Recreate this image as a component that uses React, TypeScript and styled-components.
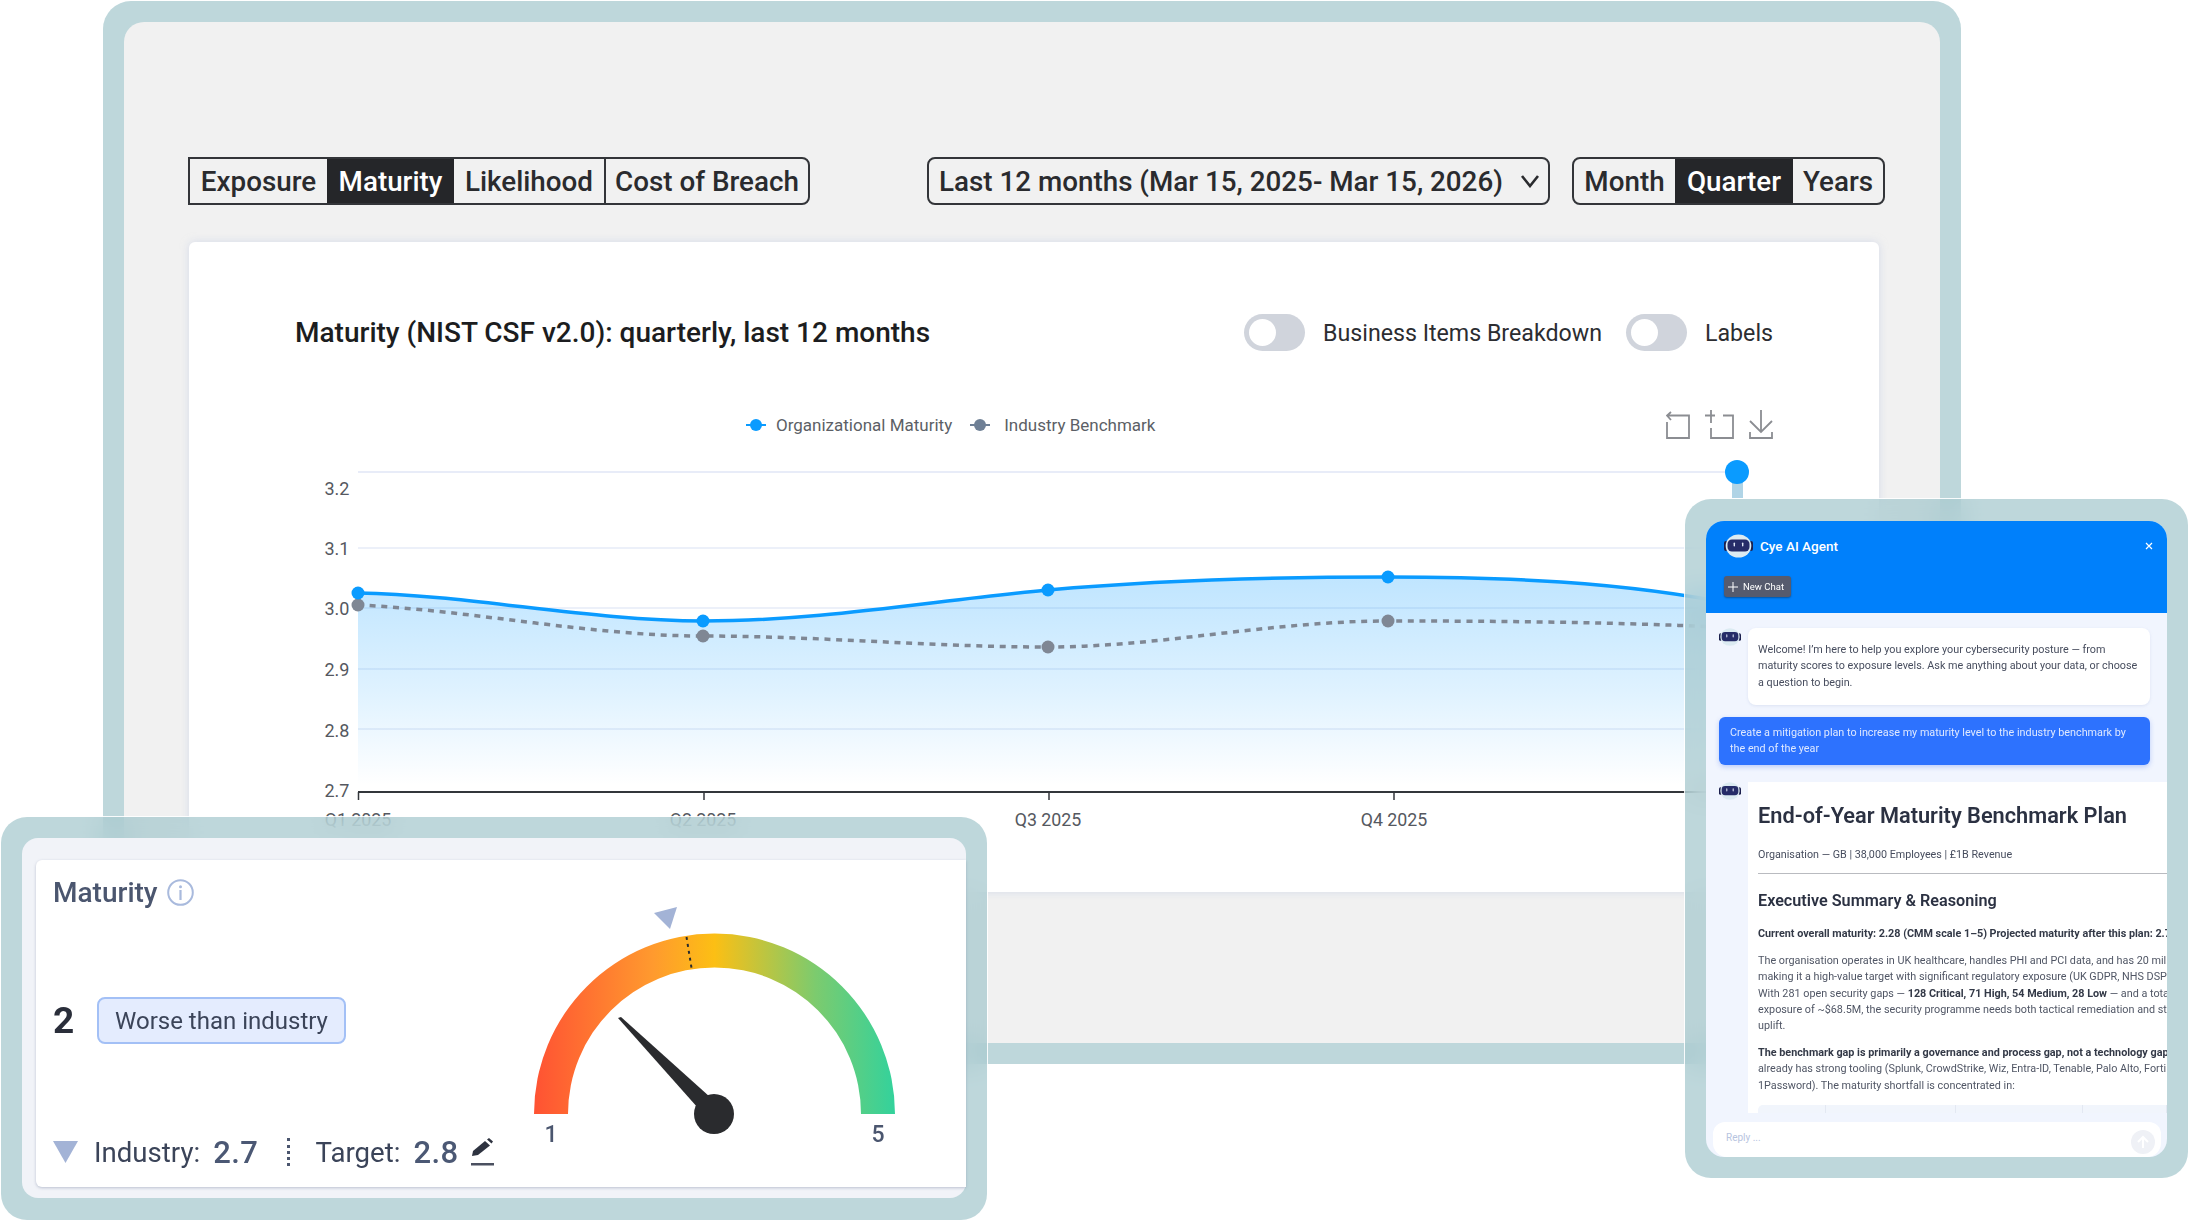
import React from 'react';
import styled, { createGlobalStyle } from 'styled-components';

const Global = createGlobalStyle`
  html, body { margin: 0; padding: 0; background: #fff; }
  body { font-family: Roboto, "Liberation Sans", sans-serif; }
  * { box-sizing: border-box; }
`;

const Page = styled.div`
  position: relative;
  width: 2190px;
  height: 1222px;
  overflow: hidden;
  background: #fff;
  padding: 1px 0 0 103px;
`;

const MainFrame = styled.div`
  width: 1858px;
  height: 1063px;
  padding: 21px;
  background: #bed7db;
  border-radius: 28px;
`;

const MainInner = styled.div`
  height: 100%;
  border-radius: 20px;
  background: #f1f1f1;
  padding: 135px 54px 0 64px;
`;

const Toolbar = styled.div`
  display: flex;
  align-items: center;
  justify-content: space-between;
  width: 1697px;
  height: 48px;
`;

const RightTools = styled.div`
  display: flex;
  gap: 22px;
`;

const Segment = styled.div<{ $squareLeft?: boolean }>`
  display: flex;
  height: 48px;
  border: 2px solid #333539;
  border-radius: ${p => (p.$squareLeft ? '0 8px 8px 0' : '8px')};
  overflow: hidden;
  background: #f1f1f1;
`;

const SegmentItem = styled.div<{ $active?: boolean; $w: number; $sep?: boolean }>`
  display: flex;
  align-items: center;
  justify-content: center;
  width: ${p => p.$w}px;
  font-size: 27.8px;
  font-weight: 500;
  white-space: nowrap;
  color: ${p => (p.$active ? '#fff' : '#2a2b2e')};
  background: ${p => (p.$active ? '#252629' : 'transparent')};
  border-left: ${p => (p.$sep ? '2px solid #333539' : 'none')};
`;

const DateSelect = styled.div`
  display: flex;
  align-items: center;
  justify-content: space-between;
  width: 623px;
  height: 48px;
  padding: 0 8px 0 10px;
  border: 2px solid #333539;
  border-radius: 8px;
  font-size: 27.8px;
  font-weight: 500;
  color: #2a2b2e;
  white-space: nowrap;
`;

const Chevron = styled.svg`
  flex: none;
`;

const Card = styled.div`
  width: 1690px;
  height: 650px;
  margin: 37px 0 0 1px;
  padding: 72px 106px 0 106px;
  background: #fff;
  border-radius: 6px;
  box-shadow: 0 0 8px rgba(190, 200, 225, 0.55);
`;

const CardHead = styled.div`
  display: flex;
  align-items: center;
  justify-content: space-between;
  height: 37px;
`;

const CardTitle = styled.div`
  font-size: 28px;
  font-weight: 500;
  color: #1c1d20;
  white-space: nowrap;
`;

const Toggles = styled.div`
  display: flex;
  align-items: center;
`;

const ToggleTrack = styled.div<{ $ml: number }>`
  width: 61px;
  height: 37px;
  margin-left: ${p => p.$ml}px;
  padding: 5px;
  border-radius: 19px;
  background: #d0d4dc;
`;

const ToggleThumb = styled.div`
  width: 27px;
  height: 27px;
  border-radius: 50%;
  background: #fff;
`;

const ToggleLabel = styled.div`
  margin-left: 18px;
  font-size: 23.2px;
  color: #2c2d31;
  white-space: nowrap;
`;

const ChartHead = styled.div`
  display: flex;
  align-items: center;
  height: 30px;
  margin-top: 59px;
  padding-left: 451px;
`;

const LegendItem = styled.div<{ $ml?: number }>`
  display: flex;
  align-items: center;
  margin-left: ${p => p.$ml ?? 0}px;
  font-size: 17px;
  color: #5c5f66;
  white-space: nowrap;
`;

const LegendMark = styled.svg<{ $mr: number }>`
  width: 20px;
  height: 16px;
  margin-right: ${p => p.$mr}px;
`;

const ChartTools = styled.div`
  display: flex;
  margin-left: auto;
  gap: 14px;
  color: #8b8d92;
  height: 30px;
`;

const ChartSvg = styled.svg`
  display: block;
  margin: 20px 0 0 -105px;
  overflow: visible;
  font-family: Roboto, "Liberation Sans", sans-serif;
`;

const GaugePanel = styled.div`
  position: absolute;
  left: 1px;
  top: 817px;
  width: 986px;
  height: 403px;
  padding: 21px;
  border-radius: 26px;
  background: rgba(162, 198, 204, 0.7);
  backdrop-filter: blur(14px);
  box-shadow: 0 0 0 1px rgba(255, 255, 255, 0.9);
`;

const GaugeInner = styled.div`
  height: 360px;
  padding: 22px 0 11px 14px;
  background: #f1f3f8;
  border-radius: 16px;
`;

const GaugeCard = styled.div`
  position: relative;
  display: flex;
  height: 327px;
  background: #fff;
  border-radius: 6px 0 0 6px;
  box-shadow: 0 1px 3px rgba(120, 130, 160, 0.45);
`;

const GaugeLeft = styled.div`
  display: flex;
  flex-direction: column;
  width: 490px;
  padding: 0 0 0 17px;
`;

const GaugeTitle = styled.div`
  display: flex;
  align-items: center;
  gap: 9px;
  height: 27px;
  margin-top: 19px;
  font-size: 28px;
  font-weight: 500;
  color: #4b566f;
`;

const ScoreRow = styled.div`
  display: flex;
  align-items: center;
  height: 47px;
  margin-top: 91px;
`;

const Score = styled.div`
  width: 44px;
  font-size: 37px;
  font-weight: 700;
  color: #2a2e3a;
`;

const ScoreBadge = styled.div`
  display: flex;
  align-items: center;
  justify-content: center;
  width: 249px;
  height: 47px;
  border: 2px solid #a3c0f6;
  border-radius: 8px;
  background: #e4ecfe;
  font-size: 24px;
  color: #3b4459;
  white-space: nowrap;
`;

const StatsRow = styled.div`
  display: flex;
  align-items: center;
  height: 30px;
  margin-top: 93px;
  white-space: nowrap;
`;

const StatLabel = styled.div<{ $ml: number }>`
  margin-left: ${p => p.$ml}px;
  font-size: 27.6px;
  color: #3b4459;
`;

const StatValue = styled.div`
  margin-left: 13px;
  font-size: 31px;
  font-weight: 500;
  letter-spacing: 0.5px;
  color: #4b5874;
`;

const StatDivider = styled.div`
  width: 0;
  height: 28px;
  margin-left: 29px;
  border-left: 3px dotted #4b566f;
`;

const EditIcon = styled.svg`
  margin-left: 11px;
`;

const GaugeSvg = styled.svg`
  position: absolute;
  left: 464px;
  top: 22px;
  font-family: Roboto, "Liberation Sans", sans-serif;
`;

const ChatPanel = styled.div`
  position: absolute;
  left: 1685px;
  top: 499px;
  width: 503px;
  height: 679px;
  padding: 22px 21px 21px 21px;
  border-radius: 26px;
  background: rgba(162, 198, 204, 0.7);
  backdrop-filter: blur(14px);
  box-shadow: 0 0 0 1px rgba(255, 255, 255, 0.9);
`;

const ChatInner = styled.div`
  display: flex;
  flex-direction: column;
  width: 461px;
  height: 636px;
  border-radius: 18px;
  overflow: hidden;
  background: #f1f5fe;
  font-family: Roboto, "Liberation Sans", sans-serif;
`;

const ChatHeader = styled.div`
  flex: none;
  height: 92px;
  padding: 13px 13px 0 18px;
  background: #0080fb;
`;

const ChatTitleRow = styled.div`
  display: flex;
  align-items: center;
  height: 24px;
  color: #fff;
  font-size: 13.5px;
  font-weight: 500;
`;

const ChatTitle = styled.div`
  margin-left: 7px;
`;

const CloseBtn = styled.div`
  display: flex;
  margin-left: auto;
  color: #fff;
`;

const NewChat = styled.div`
  display: flex;
  align-items: center;
  gap: 5px;
  width: 67px;
  height: 21px;
  margin-top: 18px;
  padding-left: 4px;
  border-radius: 3px;
  background: #565b6e;
  box-shadow: 0 1px 2px rgba(0, 0, 0, 0.35);
  color: #fff;
  font-size: 9.5px;
  white-space: nowrap;
`;

const ChatBody = styled.div`
  flex: 1;
  min-height: 0;
  overflow: hidden;
  padding: 15px 0 0 13px;
`;

const BotRow = styled.div<{ $mt?: number }>`
  display: flex;
  margin-top: ${p => p.$mt ?? 0}px;
`;

const BotAvatar = styled.div`
  flex: none;
  width: 29px;
`;

const WelcomeBubble = styled.div`
  width: 402px;
  height: 77px;
  padding: 14px 10px 0;
  border-radius: 8px;
  background: #fff;
  box-shadow: 0 1px 3px rgba(160, 175, 210, 0.25);
  font-size: 10.8px;
  line-height: 16.3px;
  color: #474d5e;
  white-space: nowrap;
`;

const UserBubble = styled.div`
  width: 431px;
  height: 48px;
  margin-top: 12px;
  padding: 8px 11px 0;
  border-radius: 6px;
  background: #2d72fe;
  box-shadow: 0 2px 5px rgba(60, 110, 240, 0.3);
  font-size: 10.8px;
  line-height: 16.3px;
  color: #dfe9ff;
  white-space: nowrap;
`;

const PlanCard = styled.div`
  width: 420px;
  height: 331px;
  padding: 21px 0 0 10px;
  background: #fff;
  overflow: hidden;
  white-space: nowrap;
`;

const PlanH1 = styled.div`
  font-size: 21.75px;
  line-height: 26px;
  font-weight: 600;
  color: #2b3142;
`;

const PlanMeta = styled.div`
  margin-top: 19px;
  font-size: 10.75px;
  line-height: 14px;
  color: #474d5e;
`;

const PlanRule = styled.div`
  height: 1px;
  margin-top: 11px;
  background: #b9bbc0;
`;

const PlanH2 = styled.div`
  margin-top: 17px;
  font-size: 16.2px;
  line-height: 20px;
  font-weight: 600;
  color: #2b3142;
`;

const PlanText = styled.div<{ $mt: number }>`
  margin-top: ${p => p.$mt}px;
  font-size: 10.8px;
  line-height: 16.2px;
  color: #505665;
`;

const Strong = styled.b`
  font-weight: 700;
  color: #333947;
`;

const PlanTable = styled.div`
  display: grid;
  grid-template-columns: 68px 130px 127px 1fr;
  height: 12px;
  margin-top: 11px;
  border-radius: 5px 0 0 0;
  background: #f1f5fc;
`;

const PlanCell = styled.div`
  border-right: 1px solid #e3e8f2;
`;

const ReplyBar = styled.div`
  flex: none;
  display: flex;
  align-items: center;
  position: relative;
  width: 448px;
  height: 35px;
  margin: 9px 0 0 7px;
  padding: 0 0 5px 13px;
  border-radius: 12px 12px 14px 14px;
  background: #fff;
  color: #b7c4e0;
  font-size: 10px;
`;

const SendBtn = styled.div`
  position: absolute;
  right: 6px;
  top: 8px;
  display: flex;
  align-items: center;
  justify-content: center;
  width: 24px;
  height: 24px;
  border-radius: 50%;
  background: #eff1f6;
  color: #fff;
`;

const Robot = ({ w, h }: { w: number; h: number }) => (
  <svg width={w} height={h} viewBox="0 0 29 23" fill="none">
    <rect x="0" y="6.5" width="4" height="10" rx="2" fill="#1b1f4d" />
    <rect x="25" y="6.5" width="4" height="10" rx="2" fill="#1b1f4d" />
    <ellipse cx="14.5" cy="11.5" rx="12.8" ry="11.5" fill="#dcebf2" />
    <rect x="3.5" y="5" width="22" height="12" rx="4.5" fill="#262c68" />
    <rect x="9.6" y="8" width="1.4" height="4" rx="0.7" fill="#dfe6f5" />
    <rect x="18" y="8" width="1.4" height="4" rx="0.7" fill="#dfe6f5" />
  </svg>
);

const gridYs = [548, 608, 669, 729];
const ox = 190;
const orgPath =
  'M358 593 C470 595 590 621 703 621 C820 621 930 601 1048 590 C1160 580 1270 577 1388 577 C1500 577 1620 581 1738 605';

const Chart = () => (
  <ChartSvg width={1690} height={400} viewBox={`${ox} 460 1690 400`}>
    <defs>
      <linearGradient id="area" x1="0" y1="0" x2="0" y2="1">
        <stop offset="0" stopColor="#0a9bff" stopOpacity="0.26" />
        <stop offset="0.55" stopColor="#0a9bff" stopOpacity="0.13" />
        <stop offset="1" stopColor="#0a9bff" stopOpacity="0" />
      </linearGradient>
    </defs>
    <line x1={358} x2={1738} y1={472} y2={472} stroke="#e8ecf8" strokeWidth={2} />
    {gridYs.map(y => (
      <line key={y} x1={358} x2={1738} y1={y} y2={y} stroke="#e6ebf7" strokeWidth={1.5} />
    ))}
    <path d={`${orgPath} L1738 785 L358 785 Z`} fill="url(#area)" />
    <path
      d="M358 605 C470 610 590 636 703 636 C820 636 930 647 1048 647 C1160 647 1270 621 1388 621 C1500 621 1620 622 1738 628"
      fill="none"
      stroke="#7f8794"
      strokeWidth={3.5}
      strokeDasharray="6 5.7"
    />
    <path d={orgPath} fill="none" stroke="#0a9bff" strokeWidth={3.5} />
    {[[358, 605], [703, 636], [1048, 647], [1388, 621]].map(([x, y]) => (
      <circle key={x} cx={x} cy={y} r={6.5} fill="#7f8794" />
    ))}
    {[[358, 593], [703, 621], [1048, 590], [1388, 577]].map(([x, y]) => (
      <circle key={x} cx={x} cy={y} r={6.5} fill="#0a9bff" />
    ))}
    <rect x={1732} y={482} width={11} height={16} fill="#b0d4e6" />
    <circle cx={1737} cy={472} r={12} fill="#0a9bff" />
    <line x1={358} x2={1738} y1={792} y2={792} stroke="#33363b" strokeWidth={2} />
    {[358.5, 704, 1049, 1394, 1739].map(x => (
      <line key={x} x1={x} x2={x} y1={792} y2={800} stroke="#33363b" strokeWidth={1.5} />
    ))}
    {[['3.2', 488], ['3.1', 548], ['3.0', 608], ['2.9', 669], ['2.8', 730], ['2.7', 790]].map(([t, y]) => (
      <text key={t} x={337} y={Number(y) + 6.5} textAnchor="middle" fontSize={18} fill="#555860">{t}</text>
    ))}
    {[['Q1 2025', 358], ['Q2 2025', 703], ['Q3 2025', 1048], ['Q4 2025', 1394]].map(([t, x]) => (
      <text key={t} x={Number(x)} y={826} textAnchor="middle" fontSize={17.8} fill="#555860">{t}</text>
    ))}
  </ChartSvg>
);

const Gauge = () => (
  <GaugeSvg width={420} height={300} viewBox="500 882 420 300">
    <defs>
      <linearGradient id="gg" gradientUnits="userSpaceOnUse" x1="534" y1="0" x2="895" y2="0">
        <stop offset="0" stopColor="#ff5233" />
        <stop offset="0.33" stopColor="#ff9a2e" />
        <stop offset="0.5" stopColor="#fcbf14" />
        <stop offset="0.78" stopColor="#7ccb6e" />
        <stop offset="1" stopColor="#33d29c" />
      </linearGradient>
    </defs>
    <path d="M534 1114 A180.5 180.5 0 0 1 895 1114 L861 1114 A146.5 146.5 0 0 0 568 1114 Z" fill="url(#gg)" />
    <line x1={686.5} y1={937} x2={692} y2={971} stroke="#2a2b2e" strokeWidth={2} strokeDasharray="3 4" />
    <polygon points="654,913 677,907 670,929" fill="#a3b3d6" />
    <polygon points="618,1018 621,1017 710,1097 698,1108" fill="#2a2b2e" />
    <circle cx={714} cy={1114} r={20} fill="#2a2b2e" />
    <text x={551} y={1142} textAnchor="middle" fontSize={23} fontWeight={500} fill="#4b566f">1</text>
    <text x={878} y={1142} textAnchor="middle" fontSize={23} fontWeight={500} fill="#4b566f">5</text>
  </GaugeSvg>
);

export default function App() {
  return (
    <Page>
      <Global />
      <MainFrame>
        <MainInner>
          <Toolbar>
            <Segment $squareLeft>
              <SegmentItem $w={137}>Exposure</SegmentItem>
              <SegmentItem $w={127} $active>Maturity</SegmentItem>
              <SegmentItem $w={150}>Likelihood</SegmentItem>
              <SegmentItem $w={204} $sep>Cost of Breach</SegmentItem>
            </Segment>
            <RightTools>
              <DateSelect>
                Last 12 months (Mar 15, 2025- Mar 15, 2026)
                <Chevron width="20" height="14" viewBox="0 0 20 14" fill="none">
                  <path d="M2 2 L10 12 L18 2" stroke="#2a2b2e" strokeWidth="2.6" />
                </Chevron>
              </DateSelect>
              <Segment>
                <SegmentItem $w={101}>Month</SegmentItem>
                <SegmentItem $w={118} $active>Quarter</SegmentItem>
                <SegmentItem $w={90}>Years</SegmentItem>
              </Segment>
            </RightTools>
          </Toolbar>
          <Card>
            <CardHead>
              <CardTitle>Maturity (NIST CSF v2.0): quarterly, last 12 months</CardTitle>
              <Toggles>
                <ToggleTrack $ml={0}><ToggleThumb /></ToggleTrack>
                <ToggleLabel>Business Items Breakdown</ToggleLabel>
                <ToggleTrack $ml={24}><ToggleThumb /></ToggleTrack>
                <ToggleLabel>Labels</ToggleLabel>
              </Toggles>
            </CardHead>
            <ChartHead>
              <LegendItem>
                <LegendMark $mr={10} viewBox="0 0 20 16">
                  <line x1="0" x2="20" y1="8" y2="8" stroke="#0a9bff" strokeWidth="2" />
                  <circle cx="10" cy="8" r="6" fill="#0a9bff" />
                </LegendMark>
                Organizational Maturity
              </LegendItem>
              <LegendItem $ml={18}>
                <LegendMark $mr={14} viewBox="0 0 20 16">
                  <line x1="0" x2="20" y1="8" y2="8" stroke="#6f8096" strokeWidth="2" />
                  <circle cx="10" cy="8" r="6" fill="#6f8096" />
                </LegendMark>
                Industry Benchmark
              </LegendItem>
              <ChartTools>
                <svg width="24" height="30" viewBox="0 0 24 30" fill="none" stroke="currentColor" strokeWidth="1.8">
                  <path d="M2 5.5 H23 V28 H1 V12 M5 2 L1 5.5 L5 10" />
                </svg>
                <svg width="31" height="30" viewBox="0 0 31 30" fill="none" stroke="currentColor" strokeWidth="1.8">
                  <path d="M1 5.5 H11 M19 5.5 H29 V28 H7 V18 M7 0 V13" />
                </svg>
                <svg width="24" height="30" viewBox="0 0 24 30" fill="none" stroke="currentColor" strokeWidth="1.8">
                  <path d="M12 0 V22 M1 11 L12 22 L23 11 M1 22 V28 H23 V22" />
                </svg>
              </ChartTools>
            </ChartHead>
            <Chart />
          </Card>
        </MainInner>
      </MainFrame>

      <GaugePanel>
        <GaugeInner>
          <GaugeCard>
            <GaugeLeft>
              <GaugeTitle>
                Maturity
                <svg width="27" height="27" viewBox="0 0 27 27" fill="none">
                  <circle cx="13.5" cy="13.5" r="12.3" stroke="#a9badd" strokeWidth="2" />
                  <circle cx="13.5" cy="7.8" r="1.5" fill="#a9badd" />
                  <rect x="12.4" y="11" width="2.2" height="10" fill="#a9badd" />
                </svg>
              </GaugeTitle>
              <ScoreRow>
                <Score>2</Score>
                <ScoreBadge>Worse than industry</ScoreBadge>
              </ScoreRow>
              <StatsRow>
                <svg width="25" height="22" viewBox="0 0 25 22">
                  <polygon points="0,0 25,0 12.5,22" fill="#a3b3d6" />
                </svg>
                <StatLabel $ml={16}>Industry:</StatLabel>
                <StatValue>2.7</StatValue>
                <StatDivider />
                <StatLabel $ml={25}>Target:</StatLabel>
                <StatValue>2.8</StatValue>
                <EditIcon width="26" height="28" viewBox="0 0 26 28">
                  <polygon points="2,18 3,13 15,3 20,7.5 8,17" fill="#2e3340" />
                  <polygon points="17,1.5 19,0 23,3.5 21.5,5.5" fill="#2e3340" />
                  <rect x="1" y="25" width="23" height="2.5" fill="#4b5060" />
                </EditIcon>
              </StatsRow>
            </GaugeLeft>
            <Gauge />
          </GaugeCard>
        </GaugeInner>
      </GaugePanel>

      <ChatPanel>
        <ChatInner>
          <ChatHeader>
            <ChatTitleRow>
              <Robot w={29} h={24} />
              <ChatTitle>Cye AI Agent</ChatTitle>
              <CloseBtn>
                <svg width="10" height="10" viewBox="0 0 10 10" stroke="currentColor" strokeWidth="1.2">
                  <path d="M2 2 L8 8 M8 2 L2 8" />
                </svg>
              </CloseBtn>
            </ChatTitleRow>
            <NewChat>
              <svg width="10" height="10" viewBox="0 0 10 10" stroke="currentColor" strokeWidth="1">
                <path d="M5 0 V10 M0 5 H10" />
              </svg>
              New Chat
            </NewChat>
          </ChatHeader>
          <ChatBody>
            <BotRow>
              <BotAvatar><Robot w={22} h={18} /></BotAvatar>
              <WelcomeBubble>
                Welcome! I’m here to help you explore your cybersecurity posture — from<br />
                maturity scores to exposure levels. Ask me anything about your data, or choose<br />
                a question to begin.
              </WelcomeBubble>
            </BotRow>
            <UserBubble>
              Create a mitigation plan to increase my maturity level to the industry benchmark by<br />
              the end of the year
            </UserBubble>
            <BotRow $mt={17}>
              <BotAvatar><Robot w={22} h={18} /></BotAvatar>
              <PlanCard>
                <PlanH1>End-of-Year Maturity Benchmark Plan</PlanH1>
                <PlanMeta>Organisation — GB | 38,000 Employees | £1B Revenue</PlanMeta>
                <PlanRule />
                <PlanH2>Executive Summary &amp; Reasoning</PlanH2>
                <PlanText $mt={15}>
                  <Strong>Current overall maturity: 2.28 (CMM scale 1–5) Projected maturity after this plan: 2.7</Strong>
                </PlanText>
                <PlanText $mt={11}>
                  The organisation operates in UK healthcare, handles PHI and PCI data, and has 20 million<br />
                  making it a high-value target with significant regulatory exposure (UK GDPR, NHS DSPT<br />
                  With 281 open security gaps — <Strong>128 Critical, 71 High, 54 Medium, 28 Low</Strong> — and a total<br />
                  exposure of ~$68.5M, the security programme needs both tactical remediation and strategic<br />
                  uplift.
                </PlanText>
                <PlanText $mt={11}>
                  <Strong>The benchmark gap is primarily a governance and process gap, not a technology gap.</Strong><br />
                  already has strong tooling (Splunk, CrowdStrike, Wiz, Entra-ID, Tenable, Palo Alto, Fortinet<br />
                  1Password). The maturity shortfall is concentrated in:
                </PlanText>
                <PlanTable>
                  <PlanCell />
                  <PlanCell />
                  <PlanCell />
                  <PlanCell />
                </PlanTable>
              </PlanCard>
            </BotRow>
          </ChatBody>
          <ReplyBar>
            Reply ...
            <SendBtn>
              <svg width="14" height="14" viewBox="0 0 14 14" fill="none" stroke="currentColor" strokeWidth="2">
                <path d="M7 13 V2 M2 7 L7 2 L12 7" />
              </svg>
            </SendBtn>
          </ReplyBar>
        </ChatInner>
      </ChatPanel>
    </Page>
  );
}
